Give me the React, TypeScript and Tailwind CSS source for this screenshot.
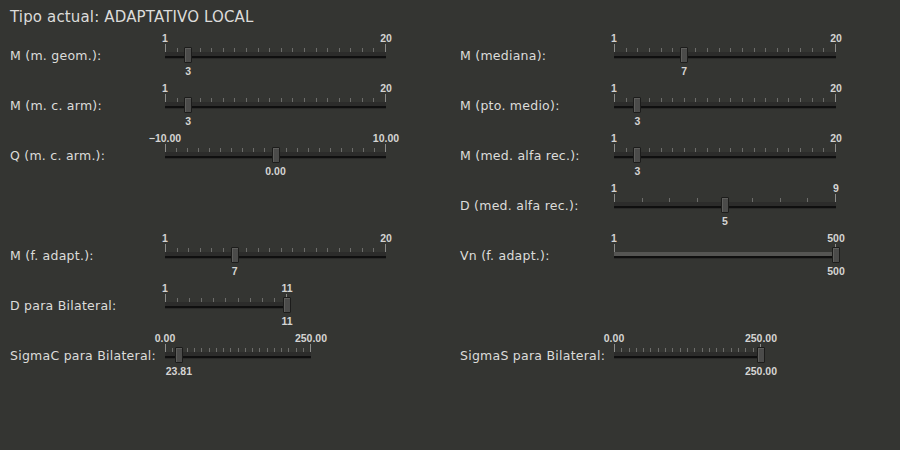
import React from "react";

type SliderSpec = {
  label: string;
  min: number;
  max: number;
  value: number;
  minText: string;
  maxText: string;
  valueText: string;
  width: number;
  intervals: number;
  filled?: boolean;
};

const left: (SliderSpec | null)[] = [
  { label: "M (m. geom.):", min: 1, max: 20, value: 3, minText: "1", maxText: "20", valueText: "3", width: 221, intervals: 19 },
  { label: "M (m. c. arm):", min: 1, max: 20, value: 3, minText: "1", maxText: "20", valueText: "3", width: 221, intervals: 19 },
  { label: "Q (m. c. arm.):", min: -10, max: 10, value: 0, minText: "−10.00", maxText: "10.00", valueText: "0.00", width: 221, intervals: 20 },
  null,
  { label: "M (f. adapt.):", min: 1, max: 20, value: 7, minText: "1", maxText: "20", valueText: "7", width: 221, intervals: 19 },
  { label: "D para Bilateral:", min: 1, max: 11, value: 11, minText: "1", maxText: "11", valueText: "11", width: 122, intervals: 10 },
  { label: "SigmaC para Bilateral:", min: 0, max: 250, value: 23.81, minText: "0.00", maxText: "250.00", valueText: "23.81", width: 146, intervals: 20 },
];

const right: (SliderSpec | null)[] = [
  { label: "M (mediana):", min: 1, max: 20, value: 7, minText: "1", maxText: "20", valueText: "7", width: 222, intervals: 19 },
  { label: "M (pto. medio):", min: 1, max: 20, value: 3, minText: "1", maxText: "20", valueText: "3", width: 222, intervals: 19 },
  { label: "M (med. alfa rec.):", min: 1, max: 20, value: 3, minText: "1", maxText: "20", valueText: "3", width: 222, intervals: 19 },
  { label: "D (med. alfa rec.):", min: 1, max: 9, value: 5, minText: "1", maxText: "9", valueText: "5", width: 222, intervals: 8 },
  { label: "Vn (f. adapt.):", min: 1, max: 500, value: 500, minText: "1", maxText: "500", valueText: "500", width: 222, intervals: 0, filled: true },
  null,
  { label: "SigmaS para Bilateral:", min: 0, max: 250, value: 250, minText: "0.00", maxText: "250.00", valueText: "250.00", width: 147, intervals: 20 },
];

// text centred on a point, without taking width in the row
function Pin({ children }: { children: React.ReactNode }) {
  return <div className="flex w-0 justify-center whitespace-nowrap">{children}</div>;
}

function Scale({ s }: { s: SliderSpec }) {
  const pos = ((s.value - s.min) / (s.max - s.min)) * s.width;
  const inner = Math.max(s.intervals - 1, 0);

  return (
    <div
      className="flex h-[50px] flex-col font-['Liberation_Sans',sans-serif] text-[10.5px] font-bold leading-[12px] text-[#d4d4d2]"
      style={{ width: s.width }}
    >
      <div className="mt-px flex justify-between">
        <Pin>{s.minText}</Pin>
        <Pin>{s.maxText}</Pin>
      </div>

      <div className="flex h-[8px] items-end justify-between">
        <div className="h-[8px] w-px bg-[#8a8a88]" />
        {Array.from({ length: inner }, (_, i) => (
          <div key={i} className="h-[4px] w-px bg-[#6c6c6a]" />
        ))}
        <div className="h-[8px] w-px bg-[#8a8a88]" />
      </div>

      <div className="relative flex flex-col">
        <div className={s.filled ? "h-[4px] bg-[#555553]" : "h-[4px] bg-[#2c2c2b]"} />
        <div className="h-[2px] bg-[#0f0f0f]" />
        <div className="h-px bg-[#2a2a29]" />
        <div
          className="absolute top-[-5px] h-[16px] w-[8px] -translate-x-1/2 rounded-[1px] border border-[#1c1c1b] bg-[#4b4b4a] shadow-[inset_1px_1px_0_#5e5e5c]"
          style={{ left: pos }}
        />
      </div>

      <div className="mt-[6px] flex" style={{ paddingLeft: pos }}>
        <Pin>{s.valueText}</Pin>
      </div>
    </div>
  );
}

function Column({ rows, labelWidth }: { rows: (SliderSpec | null)[]; labelWidth: string }) {
  return (
    <div className="flex flex-col pl-[10px]">
      {rows.map((s, i) => (
        <div key={i} className="flex h-[50px] items-center">
          {s && (
            <>
              <div className={`${labelWidth} shrink-0 whitespace-nowrap tracking-[0.25px]`}>{s.label}</div>
              <Scale s={s} />
            </>
          )}
        </div>
      ))}
    </div>
  );
}

export default function App() {
  return (
    <div className="h-[450px] w-[900px] overflow-hidden bg-[#343532] font-['DejaVu_Sans',sans-serif] text-[12.5px] text-[#dcdcda]">
      <div className="h-[31px] pl-[10px] pt-[8px] text-[15px] leading-[18px] tracking-[0.15px]">Tipo actual: ADAPTATIVO LOCAL</div>
      <div className="grid grid-cols-[450px_450px]">
        <Column rows={left} labelWidth="w-[155px]" />
        <Column rows={right} labelWidth="w-[154px]" />
      </div>
    </div>
  );
}
